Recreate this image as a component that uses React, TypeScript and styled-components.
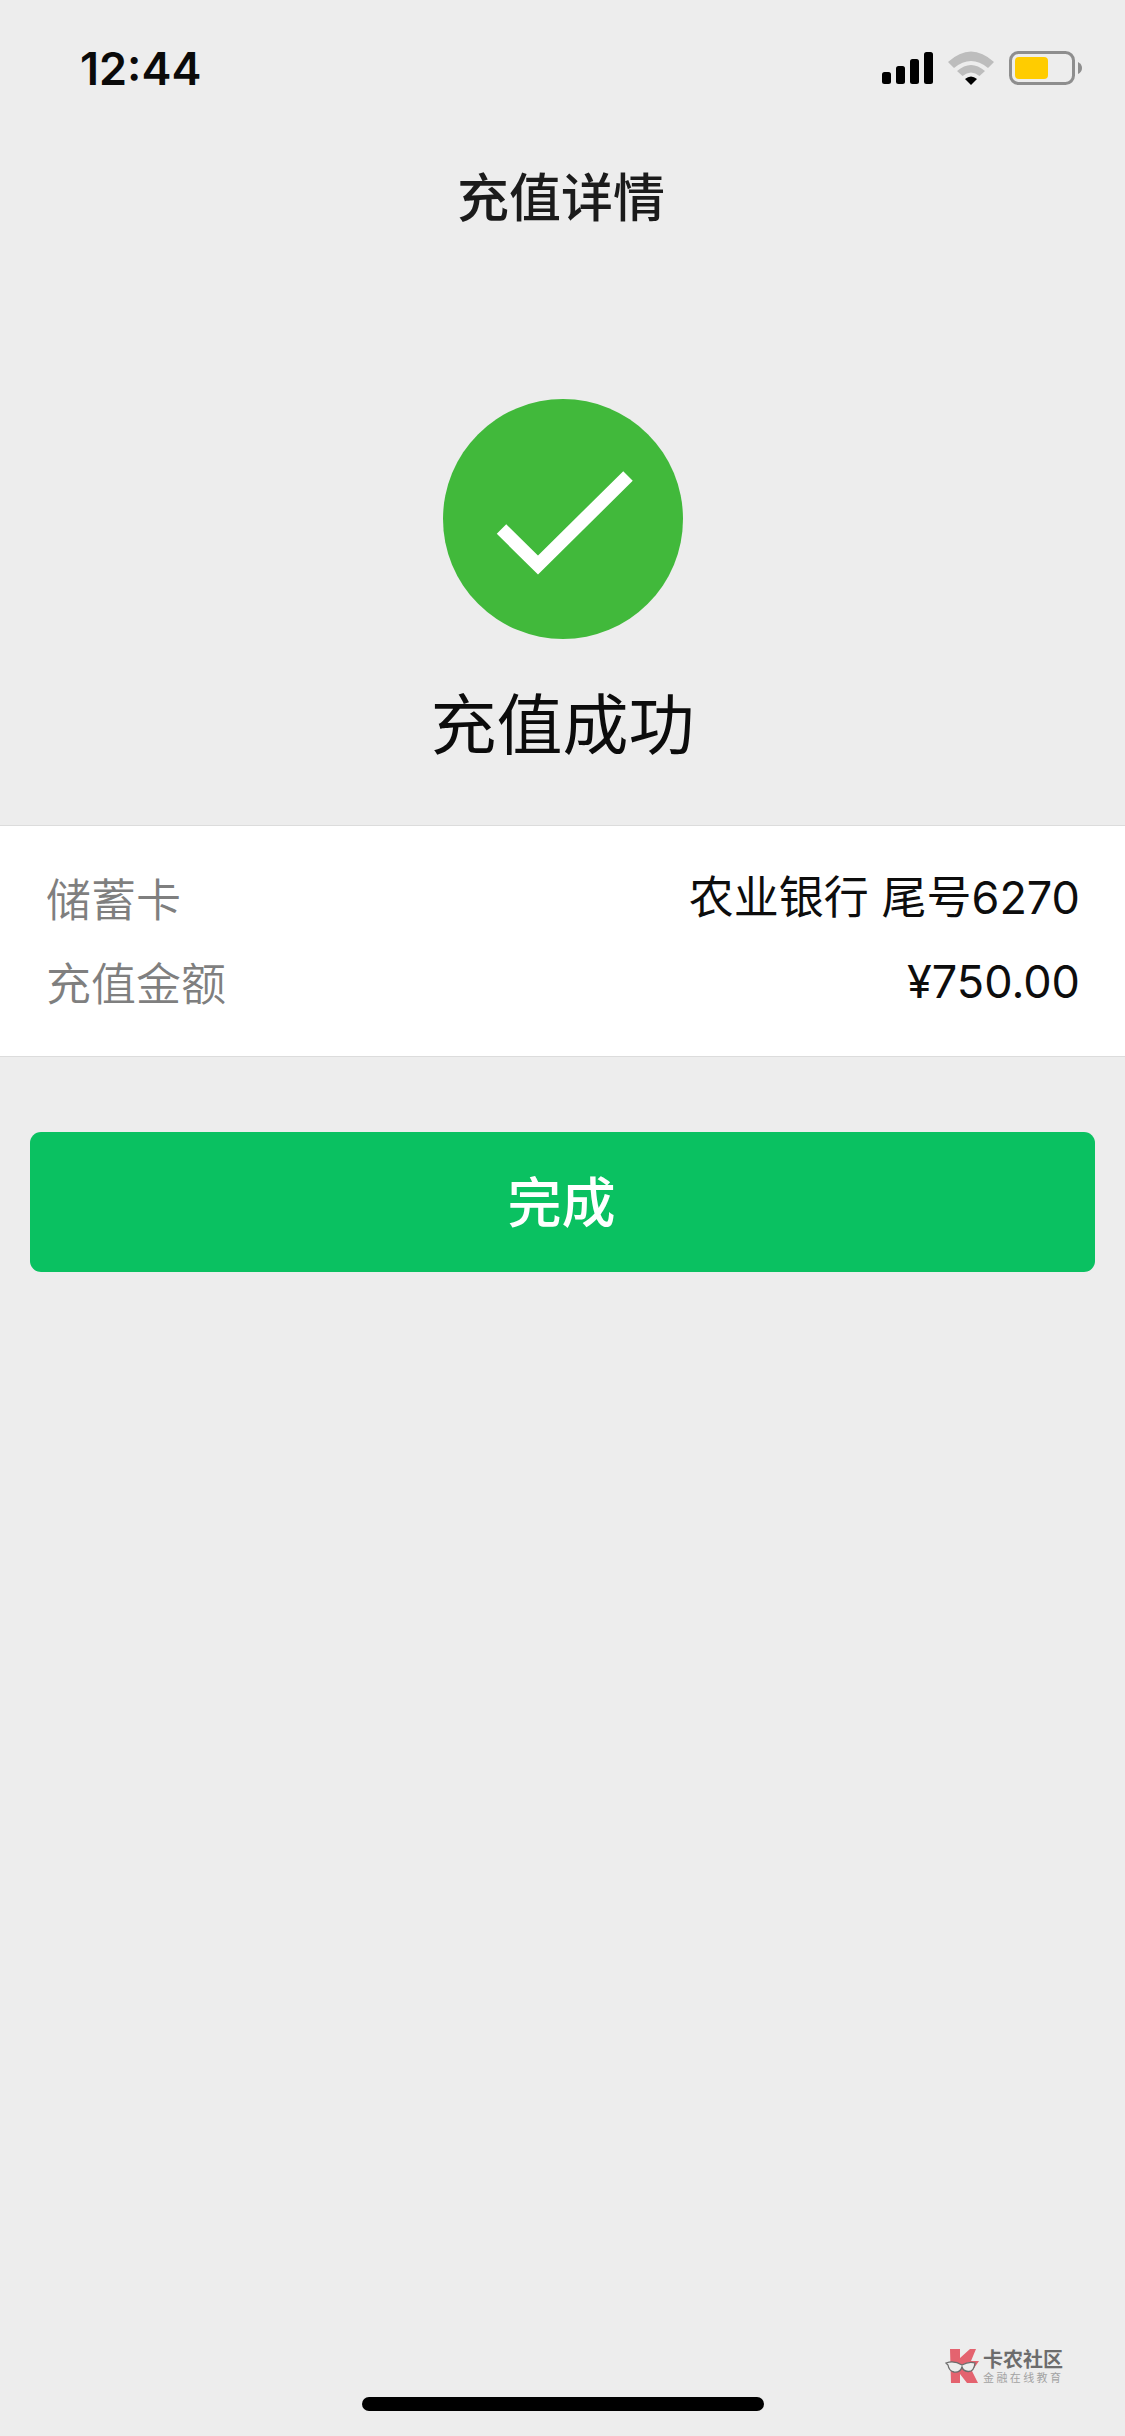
import React from "react";
import styled, { createGlobalStyle } from "styled-components";

const Global = createGlobalStyle`
  html, body { margin: 0; padding: 0; background: #ededed; }
  #root { width: 1125px; }
`;
const CJK = `"Noto Sans CJK SC", "Noto Sans", sans-serif`;

const Page = styled.div`
  position: relative;
  width: 1125px;
  height: 2436px;
  overflow: hidden;
  background: #ededed;
  font-family: ${CJK};
  display: flex;
  flex-direction: column;
`;
const StatusBar = styled.div`
  height: 137px;
  box-sizing: border-box;
  padding: 44px 42px 0 80px;
  display: flex;
  justify-content: space-between;
  align-items: flex-start;
`;
const Time = styled.div`
  font-family: Inter, sans-serif;
  font-weight: 600;
  font-size: 45px;
  line-height: 49px;
  color: #0a0a0a;
`;
const StatusIcons = styled.svg`
  width: 201px;
  height: 36px;
  margin-top: 7px;
  display: block;
`;
const NavTitle = styled.h1`
  margin: 0 0 0 -3px;
  height: 122px;
  text-align: center;
  font-size: 52px;
  line-height: 116px;
  font-weight: 500;
  color: #1b1b1b;
`;
const Hero = styled.div`
  padding-top: 140px;
  height: 566px;
  box-sizing: border-box;
  display: flex;
  flex-direction: column;
  align-items: center;
`;
const SuccessIcon = styled.svg`
  width: 240px;
  height: 240px;
  display: block;
`;
const HeroText = styled.div`
  margin-top: 33px;
  font-size: 66px;
  line-height: 96px;
  font-weight: 400;
  color: #0c0c0c;
`;
const Card = styled.section`
  background: #fff;
  border-top: 1px solid #dcdcdc;
  border-bottom: 1px solid #dcdcdc;
  box-sizing: border-box;
  height: 232px;
  padding: 40px 45px 0 46px;
  display: flex;
  flex-direction: column;
  gap: 20px;
`;
const Row = styled.div`
  display: flex;
  justify-content: space-between;
  align-items: center;
  height: 64px;
  font-size: 45px;
  line-height: 64px;
`;
const Label = styled.span`
  color: #7f7f7f;
  font-weight: 350;
`;
const Value = styled.span`
  font-family: Inter, ${CJK};
  font-weight: 400;
  color: #0d0d0d;
`;
const DoneButton = styled.button`
  display: block;
  width: 1065px;
  height: 140px;
  margin: 75px 30px 0;
  border: 0;
  border-radius: 11px;
  background: #0ac161;
  color: #fff;
  font-family: ${CJK};
  font-size: 54px;
  font-weight: 500;
  padding: 0 2px 5px 0;
`;
const HomeIndicator = styled.div`
  position: absolute;
  left: 362px;
  top: 2397px;
  width: 402px;
  height: 14px;
  border-radius: 7px;
  background: #000;
`;
const Watermark = styled.div`
  position: absolute;
  left: 945px;
  top: 2348px;
  display: flex;
  align-items: center;
  gap: 3px;
`;
const MarkLogo = styled.svg`
  width: 35px;
  height: 36px;
  display: block;
`;
const MarkText = styled.div`
  display: flex;
  flex-direction: column;
`;
const MarkName = styled.div`
  font-size: 20px;
  line-height: 22px;
  font-weight: 700;
  color: #6c6c6c;
  white-space: nowrap;
`;
const MarkSub = styled.div`
  font-size: 11px;
  line-height: 14px;
  letter-spacing: 2.4px;
  color: #a3a3a3;
  white-space: nowrap;
`;

export default function App() {
  return (
    <Page>
      <Global />
      <StatusBar>
        <Time>12:44</Time>
        <StatusIcons viewBox="0 0 201 36">
          <rect x="0" y="21" width="9" height="12" rx="2.5" fill="#000" />
          <rect x="14" y="15" width="9" height="18" rx="2.5" fill="#000" />
          <rect x="28" y="8" width="9" height="25" rx="2.5" fill="#000" />
          <rect x="42" y="1" width="9" height="32" rx="2.5" fill="#000" />
          <path d="M66 11 Q89 -10 112 11 L106 17 Q89 3 72 17 Z" fill="#bdbdbd" />
          <path d="M75 20 Q89 8 103 20 L97.5 25 Q89 18 80.500 25 Z" fill="#bdbdbd" />
          <path d="M83 28 Q89 23 95 28 L89 34 Z" fill="#000" />
          <rect x="128.500" y="1.500" width="63" height="31" rx="8" fill="none" stroke="#8e8e8e" strokeWidth="3" />
          <rect x="133" y="6" width="33" height="22" rx="4" fill="#ffcc00" />
          <path d="M196 11 Q200 13 200 17 Q200 21 196 23 Z" fill="#8e8e8e" />
        </StatusIcons>
      </StatusBar>
      <NavTitle>充值详情</NavTitle>
      <Hero>
        <SuccessIcon viewBox="0 0 240 240">
          <circle cx="120" cy="120" r="120" fill="#41b93b" />
          <path d="M58.500 130 L95 166 L185 77" fill="none" stroke="#fff" strokeWidth="13.500" strokeLinejoin="miter" />
        </SuccessIcon>
        <HeroText>充值成功</HeroText>
      </Hero>
      <Card>
        <Row>
          <Label>储蓄卡</Label>
          <Value>农业银行 尾号6270</Value>
        </Row>
        <Row>
          <Label>充值金额</Label>
          <Value>¥750.00</Value>
        </Row>
      </Card>
      <DoneButton>完成</DoneButton>
      <Watermark>
        <MarkLogo viewBox="0 0 35 36">
          <path d="M5 1 H15 V10 L25 1 H31 L26 13 H34 L27 23 L33 35 H22 L15 26 V35 H6 Z" fill="#e4636f" />
          <path d="M1 15 Q9 12 17 17 Q24 13 30 15 Q29 24 23 23.500 Q18 23 17 19 Q15 25 9 24 Q4 23 3 17 Z" fill="#ededed" stroke="#6d6d6d" strokeWidth="1.300" />
        </MarkLogo>
        <MarkText>
          <MarkName>卡农社区</MarkName>
          <MarkSub>金融在线教育</MarkSub>
        </MarkText>
      </Watermark>
      <HomeIndicator />
    </Page>
  );
}
